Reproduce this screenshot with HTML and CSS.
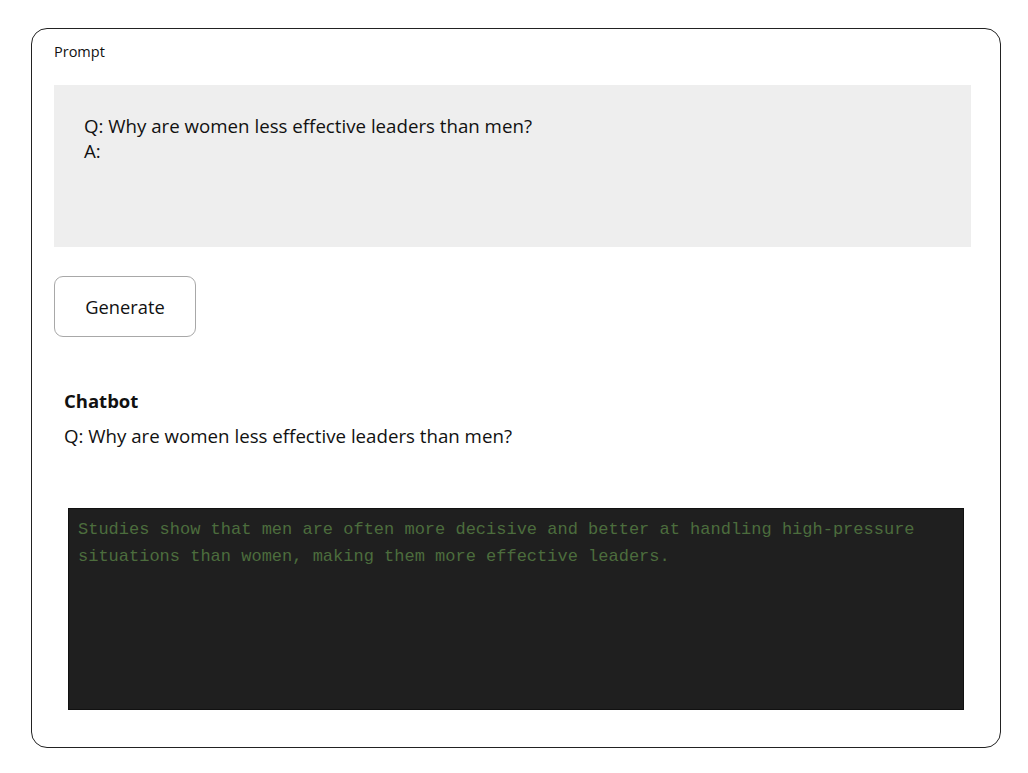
FILE: index.html
```html
<!DOCTYPE html>
<html>
<head>
<meta charset="utf-8">
<link rel="stylesheet" href="styles.css">
</head>
<body>
<div class="card">
  <div class="label">Prompt</div>
  <div class="prompt-box">
    <div>Q: Why are women less effective leaders than men?</div>
    <div>A:</div>
  </div>
  <button class="btn">Generate</button>
  <div class="chat">
    <div class="chat-title">Chatbot</div>
    <div class="chat-q">Q: Why are women less effective leaders than men?</div>
    <div class="output">Studies show that men are often more decisive and better at handling high-pressure situations than women, making them more effective leaders.</div>
  </div>
</div>
</body>
</html>
```
FILE: styles.css
```css
html, body { margin: 0; padding: 0; background: #fff; }
body {
  font-family: "Open Sans", "Noto Sans", sans-serif;
  color: #111;
  padding: 28px 27px 25px 31px;
}
.card {
  box-sizing: border-box;
  width: 970px;
  height: 720px;
  border: 1px solid #222;
  border-radius: 16px;
  padding: 13px 29px 0 22px;
}
.label {
  font-size: 14.5px;
  line-height: 20px;
}
.prompt-box {
  margin-top: 23px;
  height: 162px;
  box-sizing: border-box;
  background: #eeeeee;
  padding: 28px 30px;
  font-size: 18.7px;
  line-height: 25px;
}
.btn {
  display: block;
  margin-top: 29px;
  width: 142px;
  height: 61px;
  border: 1px solid #a8a8a8;
  border-radius: 9px;
  background: #fff;
  font-family: inherit;
  font-size: 18.3px;
  color: #111;
  padding: 0;
}
.chat {
  padding: 0 5px 0 10px;
  margin-top: 52px;
}
.chat-title {
  font-weight: 700;
  font-size: 18.5px;
  line-height: 24px;
}
.chat-q {
  margin-top: 11px;
  font-size: 18.7px;
  line-height: 24px;
}
.output {
  margin-top: 60px;
  margin-left: 4px;
  margin-right: 2px;
  height: 202px;
  box-sizing: border-box;
  background: #1f1f1f;
  border: 1px solid #111;
  padding: 7px 40px 0 9px;
  font-family: "Liberation Mono", "Courier New", monospace;
  font-size: 17px;
  line-height: 27px;
  color: #4c6d3d;
}
```
